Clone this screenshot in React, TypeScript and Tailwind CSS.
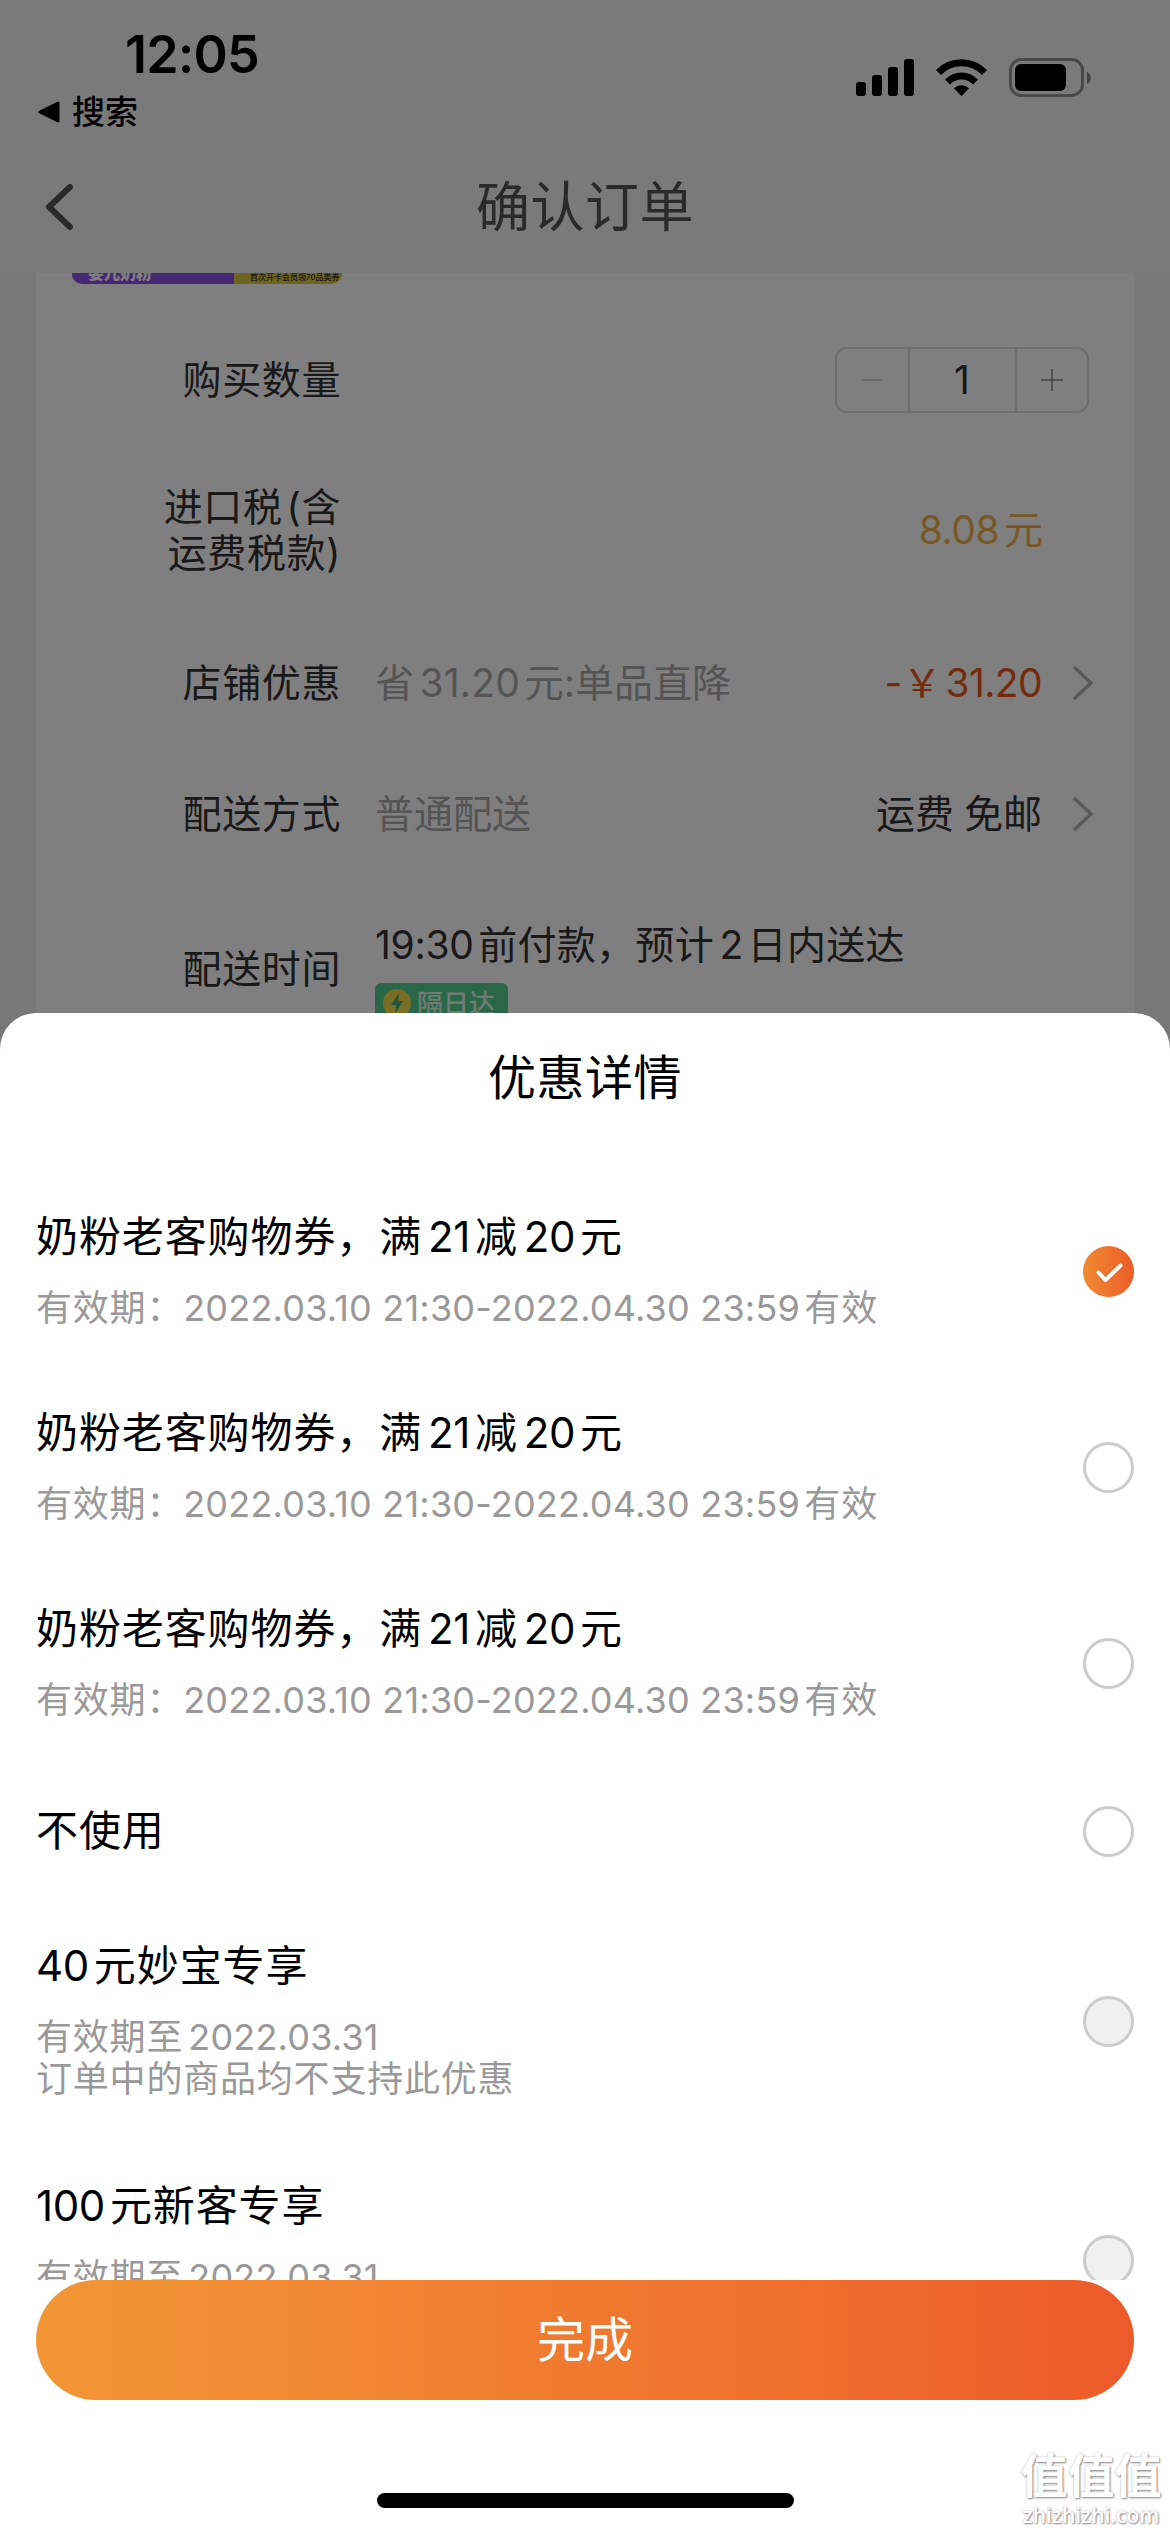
import { FC, ReactNode, useState } from "react";

interface Coupon {
  title: string;
  lines: string[];
  disabled?: boolean;
  height: string;
}

const coupons: Coupon[] = [
  { title: "奶粉老客购物券，满21减20元", lines: ["有效期：2022.03.10 21:30-2022.04.30 23:59有效"], height: "h-[196px]" },
  { title: "奶粉老客购物券，满21减20元", lines: ["有效期：2022.03.10 21:30-2022.04.30 23:59有效"], height: "h-[196px]" },
  { title: "奶粉老客购物券，满21减20元", lines: ["有效期：2022.03.10 21:30-2022.04.30 23:59有效"], height: "h-[196px]" },
  { title: "不使用", lines: [], height: "h-[140px]" },
  { title: "40元妙宝专享", lines: ["有效期至2022.03.31", "订单中的商品均不支持此优惠"], disabled: true, height: "h-[240px]" },
  { title: "100元新客专享", lines: ["有效期至2022.03.31", "订单中的商品均不支持此优惠"], disabled: true, height: "h-[239px]" },
];

// Adds a thin gap between Chinese characters and digits
const Mixed: FC<{ text: string; latin?: string }> = ({ text, latin = "" }) => (
  <>
    {text.split(/([0-9][0-9.: -]*[0-9]|[0-9])/).map((part, i, all) => {
      if (i % 2 === 0) return part;
      const before = all[i - 1] !== "" && !/[：，]$/.test(all[i - 1]);
      const after = all[i + 1] !== "";
      return (
        <span key={i} className={`${latin} ${before ? "ml-[0.14em]" : ""} ${after ? "mr-[0.12em]" : ""}`}>
          {part}
        </span>
      );
    })}
  </>
);

const StatusIcons: FC = () => (
  <svg width="236" height="40" viewBox="0 0 236 40" className="block">
    <rect x="1" y="25" width="10" height="14" rx="3" />
    <rect x="17" y="18" width="10" height="21" rx="3" />
    <rect x="33" y="10" width="10" height="29" rx="3" />
    <rect x="49" y="2" width="10" height="37" rx="3" />
    <path d="M106.500 39 L99 31.500 C103 27 110 27 114 31.500 Z" strokeLinejoin="round" />
    <path d="M92.500 25 C100.500 17 112.500 17 120.500 25" fill="none" stroke="#000" strokeWidth="7" />
    <path d="M83.500 15.500 C96 2.500 117 2.500 129.500 15.500" fill="none" stroke="#000" strokeWidth="7" />
    <rect x="155.500" y="2.500" width="72" height="36" rx="11" fill="none" stroke="#000" strokeOpacity="0.4" strokeWidth="3" />
    <rect x="160" y="7" width="51" height="27" rx="6" />
    <path d="M232 15 C237 17 237 25 232 27 Z" fillOpacity="0.45" />
  </svg>
);

const Arrow: FC = () => (
  <svg width="22" height="36" viewBox="0 0 22 36" fill="none" stroke="#b4b4b4" strokeWidth="3.500">
    <path d="M2 2 L19 18 L2 34" />
  </svg>
);

interface OrderRowProps {
  label: ReactNode;
  height: string;
  children: ReactNode;
}

const OrderRow: FC<OrderRowProps> = ({ label, height, children }) => (
  <div className={`flex items-center ${height}`}>
    <div className="w-[305px] shrink-0 text-right leading-[46px] tracking-[0.6px]">{label}</div>
    <div className="flex flex-1 items-center pl-[34px]">{children}</div>
  </div>
);

interface RadioProps {
  checked: boolean;
  disabled?: boolean;
  onSelect: () => void;
}

const Radio: FC<RadioProps> = ({ checked, disabled, onSelect }) => {
  if (checked) {
    return (
      <button className="flex size-[51px] items-center justify-center rounded-full bg-linear-to-r from-[#ee8a33] to-[#ec5b28]">
        <svg width="28" height="22" viewBox="0 0 28 22" fill="none" stroke="#fff" strokeWidth="4" strokeLinecap="round" strokeLinejoin="round">
          <path d="M3.500 12.500 L10.500 20 L25.500 5.500" />
        </svg>
      </button>
    );
  }
  return (
    <button
      onClick={onSelect}
      disabled={disabled}
      className={`size-[51px] rounded-full border-3 border-[#ccc] ${disabled ? "bg-[#f0f0f0]" : "bg-white"}`}
    />
  );
};

const App: FC = () => {
  const [selected, setSelected] = useState(0);

  return (
    <div className="relative h-[2532px] w-[1170px] overflow-hidden bg-[#f1f1f1] font-[Inter,'Noto_Sans_CJK_SC',sans-serif] text-[39px] text-[#333]">
      {/* Status bar */}
      <div className="flex h-[141px] justify-between bg-[#f5f5f5] pr-[79px] pl-[38px] text-black">
        <div>
          <div className="mt-[24px] ml-[87px] text-[52px] leading-[62px] font-semibold tracking-[-0.8px]">12:05</div>
          <div className="mt-[2px] flex items-center gap-3 text-[33px] leading-[48px] font-medium">
            <svg width="22" height="22" viewBox="0 0 22 22">
              <path d="M2 11 L20 2 V20 Z" stroke="#000" strokeWidth="3" strokeLinejoin="round" />
            </svg>
            <span>搜索</span>
          </div>
        </div>
        <div className="pt-[57px]">
          <StatusIcons />
        </div>
      </div>

      {/* Nav bar */}
      <div className="flex h-[132px] items-center bg-[#f5f5f5] px-11">
        <svg width="32" height="50" viewBox="0 0 32 50" fill="none" stroke="#555" strokeWidth="6" strokeLinecap="round" strokeLinejoin="round">
          <path d="M26 5 L5 25 L26 45" />
        </svg>
        <h1 className="flex-1 pr-8 text-center text-[54px] tracking-[0.5px] text-[#555]">确认订单</h1>
      </div>

      {/* Order card */}
      <div className="mx-9 h-[800px] overflow-hidden bg-white">
        <div className="ml-9 flex h-[11px] w-[270px] items-end overflow-hidden rounded-b-[10px] bg-[#d8c93f] whitespace-nowrap">
          <div className="flex h-[11px] w-[162px] items-end bg-[#8d4fe8] pb-[3px] pl-4 text-[16px] leading-[16px] font-black text-white">
            婴儿奶粉
          </div>
          <div className="pb-0.5 pl-4 text-[8px] leading-[9px] font-medium text-[#333]">首次开卡会员领70品类券</div>
        </div>

        <OrderRow label="购买数量" height="mt-[26px] h-[140px]">
          <div className="mr-[45px] ml-auto flex h-[66px] w-[254px] items-center rounded-xl border-2 border-[#dcdcdc]">
            <button className="flex h-full flex-1 items-center justify-center border-r-2 border-[#dcdcdc]">
              <div className="h-0.5 w-5 bg-[#ccc]" />
            </button>
            <div className="w-[105px] text-center">1</div>
            <button className="flex h-full flex-1 items-center justify-center border-l-2 border-[#dcdcdc]">
              <svg width="22" height="22" viewBox="0 0 22 22" stroke="#888" strokeWidth="1.500">
                <path d="M11 0 V22 M0 11 H22" />
              </svg>
            </button>
          </div>
        </OrderRow>

        <OrderRow label={<>进口税<span className="ml-1">(</span>含<br />运费税款)</>} height="h-[160px]">
          <div className="mr-[91px] ml-auto text-[#efb04a]">
            <Mixed text="8.08元" latin="tracking-[-0.4px]" />
          </div>
        </OrderRow>

        <OrderRow label="店铺优惠" height="h-[146px]">
          <div className="text-[#a8a8a8]">
            <Mixed text="省31.20元:单品直降" latin="tracking-[0.2px]" />
          </div>
          <div className="mr-[30px] ml-auto text-[#e8551c]">
            -￥<span className="ml-1 tracking-[-0.6px]">31.20</span>
          </div>
          <div className="mr-10">
            <Arrow />
          </div>
        </OrderRow>

        <OrderRow label="配送方式" height="h-[116px]">
          <div className="text-[#a8a8a8]">普通配送</div>
          <div className="mr-[30px] ml-auto [word-spacing:-1px]">运费 免邮</div>
          <div className="mr-10">
            <Arrow />
          </div>
        </OrderRow>

        <OrderRow label="配送时间" height="h-[194px]">
          <div className="pt-0.5">
            <div className="leading-[56px] tracking-[0.3px] whitespace-nowrap">
              <Mixed text="19:30前付款，预计2日内送达" latin="tracking-[-0.3px]" />
            </div>
            <div className="mt-[10px] flex h-10 w-[133px] items-center gap-1.5 rounded-md bg-[#55cf92] pl-2 text-[26px] font-medium text-[#dff8ec]">
              <svg width="28" height="28" viewBox="0 0 28 28">
                <circle cx="14" cy="14" r="14" fill="#f5dd4a" />
                <path d="M16 4 L8 16 H13 L12 25 L20 12 H15 Z" fill="#3fae77" />
              </svg>
              <span>隔日达</span>
            </div>
          </div>
        </OrderRow>
      </div>

      <div className="absolute inset-0 bg-black/50" />

      {/* Discount sheet */}
      <div className="absolute inset-x-0 bottom-0 flex h-[1519px] flex-col rounded-t-[36px] bg-white text-black">
        <h2 className="h-[160px] pt-[30px] text-center text-[48px] leading-[70px] tracking-[0.5px]">优惠详情</h2>
        <div className="h-[1107px] overflow-hidden">
          {coupons.map((coupon, index) => (
            <div key={index} className={`flex items-center justify-between px-9 ${coupon.height}`}>
              <div className={coupon.lines.length ? "pb-1.5" : ""}>
                <div className="text-[42px] leading-[60px] tracking-[0.9px]">
                  <Mixed text={coupon.title} latin="tracking-[-0.4px]" />
                </div>
                {coupon.lines.length > 0 && (
                  <div className="mt-5 text-[36px] leading-[42px] tracking-[0.8px] text-[#999]">
                    {coupon.lines.map((line) => (
                      <div key={line}>
                        <Mixed text={line} latin="tracking-[0.2px]" />
                      </div>
                    ))}
                  </div>
                )}
              </div>
              <Radio checked={selected === index} disabled={coupon.disabled} onSelect={() => setSelected(index)} />
            </div>
          ))}
        </div>
        <button className="mx-9 h-[120px] rounded-full bg-linear-to-r from-[#f29635] to-[#ec5a29] text-[48px] text-white">完成</button>
        <div className="mx-auto mt-[93px] h-[15px] w-[417px] rounded-full bg-black" />

        {/* Watermark */}
        <div className="absolute right-[7px] bottom-[4px] w-[144px] text-center whitespace-nowrap text-white [text-shadow:1px_1px_2px_#888,0_0_2px_#bbb]">
          <div className="text-[47px] leading-[52px] font-bold">值值值</div>
          <div className="font-['Open_Sans'] text-[21px] leading-[26px] font-semibold">zhizhizhi.com</div>
        </div>
      </div>
    </div>
  );
};

export default App;
